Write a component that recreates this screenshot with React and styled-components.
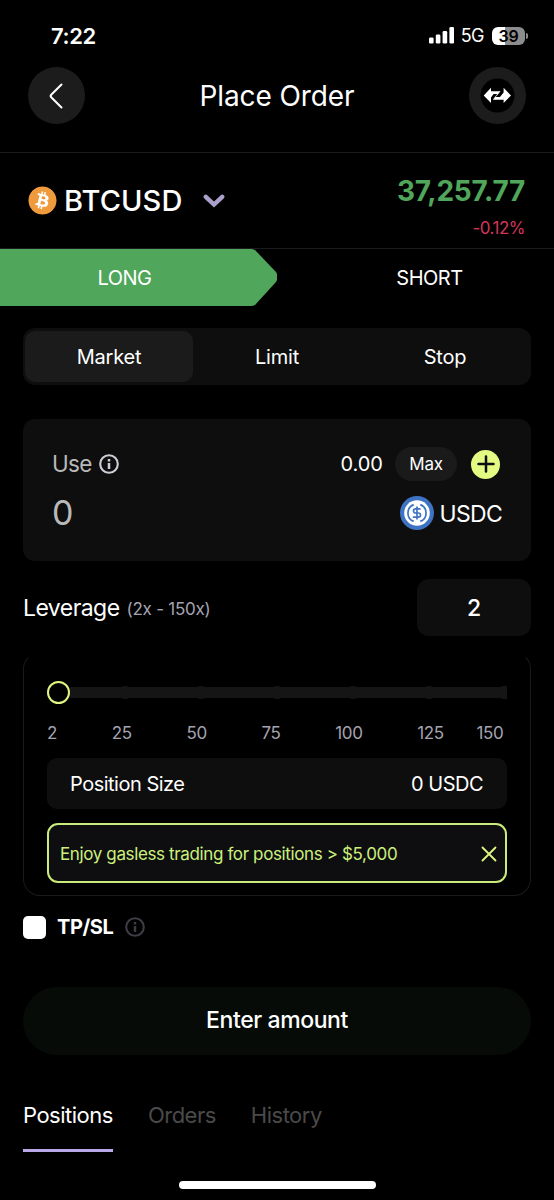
import React, { useState } from 'react';
import styled, { createGlobalStyle } from 'styled-components';
import { DollarSign } from 'lucide-react';
import { FaBitcoin } from 'react-icons/fa';

const GlobalStyle = createGlobalStyle`
  * {
    box-sizing: border-box;
  }

  body {
    margin: 0;
    background: #000;
    color: #fff;
    font-family: Inter, 'Liberation Sans', sans-serif;
  }

  button {
    padding: 0;
    border: 0;
    background: none;
    color: inherit;
    font: inherit;
  }

  svg {
    display: block;
    flex-shrink: 0;
  }
`;

const Screen = styled.div`
  display: flex;
  flex-direction: column;
  width: 554px;
  height: 1200px;
  overflow: hidden;
  background: #000;
`;

const StatusBar = styled.div`
  display: flex;
  align-items: center;
  justify-content: space-between;
  height: 67px;
  padding: 4px 26px 0 51px;
`;

const Clock = styled.span`
  font-size: 22px;
  font-weight: 600;
  letter-spacing: -0.4px;
`;

const StatusIcons = styled.div`
  display: flex;
  align-items: center;
`;

const Network = styled.span`
  margin: 0 8px 0 7px;
  font-size: 18px;
  letter-spacing: -0.5px;
`;

const Battery = styled.div`
  display: flex;
  align-items: center;
  justify-content: center;
  width: 33px;
  height: 18px;
  border-radius: 6px;
  background: linear-gradient(to right, #fff 40%, #8c8c8c 40%);
  color: #000;
  font-size: 16px;
  font-weight: 600;
  letter-spacing: -0.3px;
`;

const BatteryTip = styled.div`
  width: 2px;
  height: 6px;
  margin-left: 1px;
  border-radius: 0 3px 3px 0;
  background: #8c8c8c;
`;

const Header = styled.header`
  display: flex;
  align-items: flex-start;
  justify-content: space-between;
  height: 86px;
  padding: 0 28px;
  border-bottom: 1px solid #1b1b1e;
`;

const RoundButton = styled.button`
  display: flex;
  align-items: center;
  justify-content: center;
  width: 57px;
  height: 57px;
  border-radius: 50%;
  background: #1c1c1c;
`;

const Title = styled.h1`
  margin: 0;
  font-size: 28px;
  font-weight: 400;
  letter-spacing: -0.1px;
  line-height: 59px;
`;

const PairRow = styled.section`
  display: flex;
  align-items: center;
  justify-content: space-between;
  height: 96px;
  padding: 0 29px 0 28px;
  border-bottom: 1px solid #1b1b1e;
`;

const Pair = styled.div`
  display: flex;
  align-items: center;
`;

const CoinBadge = styled.div`
  display: flex;
  align-items: center;
  justify-content: center;
  width: 29px;
  height: 29px;
  color: #f09a3e;

  svg {
    border-radius: 50%;
    background: radial-gradient(#fff 60%, transparent 62%);
  }
`;

const PairName = styled.span`
  margin: 0 21px 0 7px;
  font-size: 29px;
  font-weight: 500;
  letter-spacing: 0.1px;
`;

const Quote = styled.div`
  display: flex;
  flex-direction: column;
  align-items: flex-end;
  gap: 9px;
  padding-top: 11px;
`;

const Price = styled.span`
  color: #50a65b;
  font-size: 28px;
  font-weight: 700;
  letter-spacing: -0.25px;
  line-height: 34px;
`;

const Change = styled.span`
  color: #d1365a;
  font-size: 17px;
  letter-spacing: -0.5px;
  line-height: 22px;
`;

const DirectionRow = styled.div`
  display: flex;
  height: 57px;
`;

const Direction = styled.button`
  width: 277px;
  padding-right: ${({ $active }) => ($active ? '28px' : '0')};
  padding-left: ${({ $active }) => ($active ? '0' : '28px')};
  background: ${({ $active }) => ($active ? '#50a65b' : 'transparent')};
  clip-path: ${({ $active }) =>
    $active ? 'polygon(0 0, 252px 0, 255px 1px, 276px 23px, 277px 25px, 277px 31px, 276px 33px, 255px 56px, 252px 100%, 0 100%)' : 'none'};
  font-size: 20px;
  letter-spacing: -0.5px;
`;

const Content = styled.main`
  display: flex;
  flex-direction: column;
  padding: 22px 23px 0;
`;

const OrderTypes = styled.div`
  display: grid;
  grid-template-columns: repeat(3, 1fr);
  height: 57px;
  padding: 3px 2px;
  border-radius: 12px;
  background: #0e0e0e;
`;

const OrderType = styled.button`
  padding-top: 1px;
  border-radius: 10px;
  background: ${({ $active }) => ($active ? '#1b1b1b' : 'transparent')};
  font-size: 20px;
  letter-spacing: -0.2px;
`;

const AmountCard = styled.section`
  display: flex;
  flex-direction: column;
  gap: 15px;
  height: 142px;
  margin-top: 34px;
  padding: 28px 29px 0 29px;
  border-radius: 12px;
  background: #0e0e0e;
`;

const AmountRow = styled.div`
  display: flex;
  align-items: center;
  justify-content: space-between;
  height: 34px;
`;

const Inline = styled.div`
  display: flex;
  align-items: center;
`;

const UseLabel = styled.span`
  margin-right: 6px;
  padding-bottom: 2px;
  color: #b9b9b9;
  font-size: 22.5px;
  letter-spacing: -0.7px;
`;

const Amount = styled.span`
  padding-bottom: 1px;
  color: #b9b9b9;
  font-size: 34px;
  letter-spacing: -1px;
`;

const Balance = styled.span`
  margin-right: 12px;
  font-size: 20px;
`;

const MaxButton = styled.button`
  width: 62px;
  height: 34px;
  margin-right: 14px;
  border-radius: 17px;
  background: #1a1a1a;
  font-size: 17px;
  letter-spacing: -0.3px;
`;

const AddButton = styled.button`
  display: flex;
  align-items: center;
  justify-content: center;
  width: 29px;
  height: 29px;
  margin-right: 2px;
  border-radius: 50%;
  background: #e3fb83;
`;

const UsdcBadge = styled.div`
  display: grid;
  place-items: center;
  width: 34px;
  height: 34px;
  margin-right: 6px;

  > svg {
    grid-area: 1 / 1;
  }
`;

const Currency = styled.span`
  padding-top: 1px;
  font-size: 23px;
  letter-spacing: -0.7px;
`;

const LeverageRow = styled.div`
  display: flex;
  align-items: center;
  justify-content: space-between;
  margin-top: 18px;
`;

const LeverageLabel = styled.span`
  margin-right: 7px;
  font-size: 23px;
  letter-spacing: -0.55px;
`;

const LeverageRange = styled.span`
  padding-top: 3px;
  color: #a5a3b0;
  font-size: 17px;
  letter-spacing: -0.25px;
`;

const LeverageInput = styled.div`
  width: 114px;
  height: 57px;
  border-radius: 12px;
  background: #0e0e0e;
  font-size: 23px;
  font-weight: 500;
  line-height: 58px;
  text-align: center;
`;

const LeveragePanel = styled.section`
  display: flex;
  flex-direction: column;
  height: 244px;
  margin-top: 16px;
  padding: 28px 23px 0;
  border: 1px solid #1a1a1a;
  border-top-color: transparent;
  border-radius: 17px;
`;

const Slider = styled.div`
  display: flex;
  align-items: center;
  height: 23px;
`;

const Thumb = styled.div`
  width: 23px;
  height: 23px;
  border: 2px solid #dff782;
  border-radius: 50%;
  background: #000;
`;

const Marks = styled.div`
  display: flex;
  gap: 54.8px;
  margin-top: 18px;
  color: #a5a3b0;
  font-size: 17px;
  letter-spacing: -0.4px;
  line-height: 22px;

  span:last-child {
    margin-left: -22px;
  }
`;

const SizeRow = styled.div`
  display: flex;
  align-items: center;
  justify-content: space-between;
  height: 51px;
  margin-top: 14px;
  padding: 0 24px 0 23px;
  border-radius: 10px;
  background: #0e0e0e;
  font-size: 20px;
  letter-spacing: -0.5px;
`;

const Notice = styled.div`
  display: flex;
  align-items: center;
  justify-content: space-between;
  height: 60px;
  margin-top: 14px;
  padding: 1px 8px 0 11px;
  border: 2px solid #c9ea7c;
  border-radius: 11px;
  background: #0e0e10;
  color: #cdf07c;
  font-size: 17px;
  letter-spacing: -0.37px;
`;

const TpSlRow = styled.label`
  display: flex;
  align-items: center;
  height: 24px;
  margin-top: 19px;
`;

const Checkbox = styled.span`
  width: 23px;
  height: 23px;
  margin-right: 11px;
  border-radius: 5px;
  background: #fff;
`;

const TpSlText = styled.span`
  margin-right: 11px;
  font-size: 20px;
  font-weight: 700;
  letter-spacing: -0.4px;
`;

const SubmitButton = styled.button`
  height: 68px;
  margin-top: 48px;
  padding-bottom: 2px;
  border-radius: 34px;
  background: #060b08;
  font-size: 23px;
  font-weight: 500;
  letter-spacing: -0.4px;
`;

const BottomTabs = styled.nav`
  display: flex;
  gap: 35px;
  height: 60px;
  margin-top: 37px;
`;

const BottomTab = styled.button`
  height: 60px;
  padding-bottom: 11px;
  border-bottom: 3px solid ${({ $active }) => ($active ? '#b8a8e8' : 'transparent')};
  color: ${({ $active }) => ($active ? '#fff' : '#4a4a4a')};
  font-size: 22px;
  letter-spacing: -0.5px;
`;

const HomeIndicator = styled.div`
  width: 197px;
  height: 8px;
  margin: 29px auto 0;
  border-radius: 4px;
  background: #fff;
`;

const ORDER_TYPES = ['Market', 'Limit', 'Stop'];
const MARKS = [2, 25, 50, 75, 100, 125, 150];
const TABS = ['Positions', 'Orders', 'History'];
const TICKS = [55, 131, 207, 283, 359];

const SignalIcon = () => (
  <svg width="25" height="17" viewBox="0 0 25 17" fill="#fff">
    <rect x="0" y="10.5" width="4.6" height="6" rx="1.3" />
    <rect x="6.8" y="7.5" width="4.6" height="9" rx="1.3" />
    <rect x="13.6" y="4" width="4.6" height="12.5" rx="1.3" />
    <rect x="20.4" y="0" width="4.6" height="16.5" rx="1.3" />
  </svg>
);

const BackIcon = () => (
  <svg width="16" height="28" viewBox="0 0 16 28" fill="none" stroke="#fff" strokeWidth="2" strokeLinecap="round">
    <path d="M12.5 2.5 2.2 12.8Q1 14 2.2 15.2L12.5 25.5" />
  </svg>
);

const SwapIcon = () => (
  <svg width="57" height="57" viewBox="0 0 57 57">
    <circle cx="28.5" cy="28.5" r="17" fill="#000" />
    <path d="M14.7 28.4 22 20.8v3.4h9.6L26.6 30h7.9l.1 2.8H23.8L28.2 27H24.5L22 30.5V36ZM42 28.5 34.6 20.8v4.6L31 30h3.6v6Z" fill="#fff" />
  </svg>
);

const ChevronIcon = () => (
  <svg width="22" height="14" viewBox="0 0 22 14" fill="none" stroke="#aaa0c9" strokeWidth="4.4" strokeLinecap="round">
    <path d="M2.8 2.8 11 10.5 19.2 2.8" />
  </svg>
);

const InfoIcon = ({ color }) => (
  <svg width="22" height="22" viewBox="0 0 22 22" fill="none" stroke={color}>
    <circle cx="11" cy="11" r="8.8" strokeWidth="2.1" />
    <path d="M11 10v6M11 6v2.4" strokeWidth="2.5" />
  </svg>
);

const PlusIcon = () => (
  <svg width="18" height="18" viewBox="0 0 18 18" stroke="#0e0e0e" strokeWidth="2.5" strokeLinecap="round">
    <path d="M9 1.5v15M1.5 9h15" />
  </svg>
);

const UsdcIcon = () => (
  <UsdcBadge>
    <svg width="34" height="34" viewBox="0 0 34 34" fill="none">
      <circle cx="17" cy="17" r="17" fill="#3e73c4" />
      <circle cx="17" cy="17" r="12.8" fill="#fff" />
      <path d="M13.7 8.6a9 9 0 0 0 0 16.8M20.3 8.6a9 9 0 0 1 0 16.8" stroke="#3e73c4" strokeWidth="1.7" />
    </svg>
    <DollarSign size={14} color="#3e73c4" strokeWidth={2.9} />
  </UsdcBadge>
);

const Track = () => (
  <svg width="437" height="13" viewBox="0 0 437 13" fill="#151515">
    <rect y="1" width="437" height="11" />
    {TICKS.map((x) => (
      <path key={x} d={`M${x - 3.5} 1 ${x - 1} -.5h2L${x + 3.5} 1v11l-2.5 1.5h-2L${x - 3.5} 12Z`} />
    ))}
    <path d="M431 1 434-.5h3v14h-3L431 12Z" />
  </svg>
);

const CloseIcon = () => (
  <svg width="16" height="16" viewBox="0 0 16 16" stroke="#dff782" strokeWidth="1.8" strokeLinecap="round">
    <path d="M1.5 1.5l13 13M14.5 1.5l-13 13" />
  </svg>
);

const App = () => {
  const [side, setSide] = useState('LONG');
  const [orderType, setOrderType] = useState('Market');
  const [tab, setTab] = useState('Positions');

  return (
    <>
      <GlobalStyle />
      <Screen>
        <StatusBar>
          <Clock>7:22</Clock>
          <StatusIcons>
            <SignalIcon />
            <Network>5G</Network>
            <Battery>39</Battery>
            <BatteryTip />
          </StatusIcons>
        </StatusBar>

        <Header>
          <RoundButton aria-label="Back">
            <BackIcon />
          </RoundButton>
          <Title>Place Order</Title>
          <RoundButton aria-label="Switch">
            <SwapIcon />
          </RoundButton>
        </Header>

        <PairRow>
          <Pair>
            <CoinBadge>
              <FaBitcoin size={29} />
            </CoinBadge>
            <PairName>BTCUSD</PairName>
            <ChevronIcon />
          </Pair>
          <Quote>
            <Price>37,257.77</Price>
            <Change>-0.12%</Change>
          </Quote>
        </PairRow>

        <DirectionRow>
          <Direction $active={side === 'LONG'} onClick={() => setSide('LONG')}>LONG</Direction>
          <Direction $active={side === 'SHORT'} onClick={() => setSide('SHORT')}>SHORT</Direction>
        </DirectionRow>

        <Content>
          <OrderTypes>
            {ORDER_TYPES.map((type) => (
              <OrderType key={type} $active={type === orderType} onClick={() => setOrderType(type)}>
                {type}
              </OrderType>
            ))}
          </OrderTypes>

          <AmountCard>
            <AmountRow>
              <Inline>
                <UseLabel>Use</UseLabel>
                <InfoIcon color="#cfcdd6" />
              </Inline>
              <Inline>
                <Balance>0.00</Balance>
                <MaxButton>Max</MaxButton>
                <AddButton aria-label="Add funds">
                  <PlusIcon />
                </AddButton>
              </Inline>
            </AmountRow>
            <AmountRow>
              <Amount>0</Amount>
              <Inline>
                <UsdcIcon />
                <Currency>USDC</Currency>
              </Inline>
            </AmountRow>
          </AmountCard>

          <LeverageRow>
            <Inline>
              <LeverageLabel>Leverage</LeverageLabel>
              <LeverageRange>(2x - 150x)</LeverageRange>
            </Inline>
            <LeverageInput>2</LeverageInput>
          </LeverageRow>

          <LeveragePanel>
            <Slider>
              <Thumb />
              <Track />
            </Slider>
            <Marks>
              {MARKS.map((mark) => (
                <span key={mark}>{mark}</span>
              ))}
            </Marks>
            <SizeRow>
              <span>Position Size</span>
              <span>0 USDC</span>
            </SizeRow>
            <Notice>
              <span>Enjoy gasless trading for positions &gt; $5,000</span>
              <CloseIcon />
            </Notice>
          </LeveragePanel>

          <TpSlRow>
            <Checkbox />
            <TpSlText>TP/SL</TpSlText>
            <InfoIcon color="#3e3c45" />
          </TpSlRow>

          <SubmitButton>Enter amount</SubmitButton>

          <BottomTabs>
            {TABS.map((name) => (
              <BottomTab key={name} $active={name === tab} onClick={() => setTab(name)}>
                {name}
              </BottomTab>
            ))}
          </BottomTabs>
        </Content>

        <HomeIndicator />
      </Screen>
    </>
  );
};

export default App;
